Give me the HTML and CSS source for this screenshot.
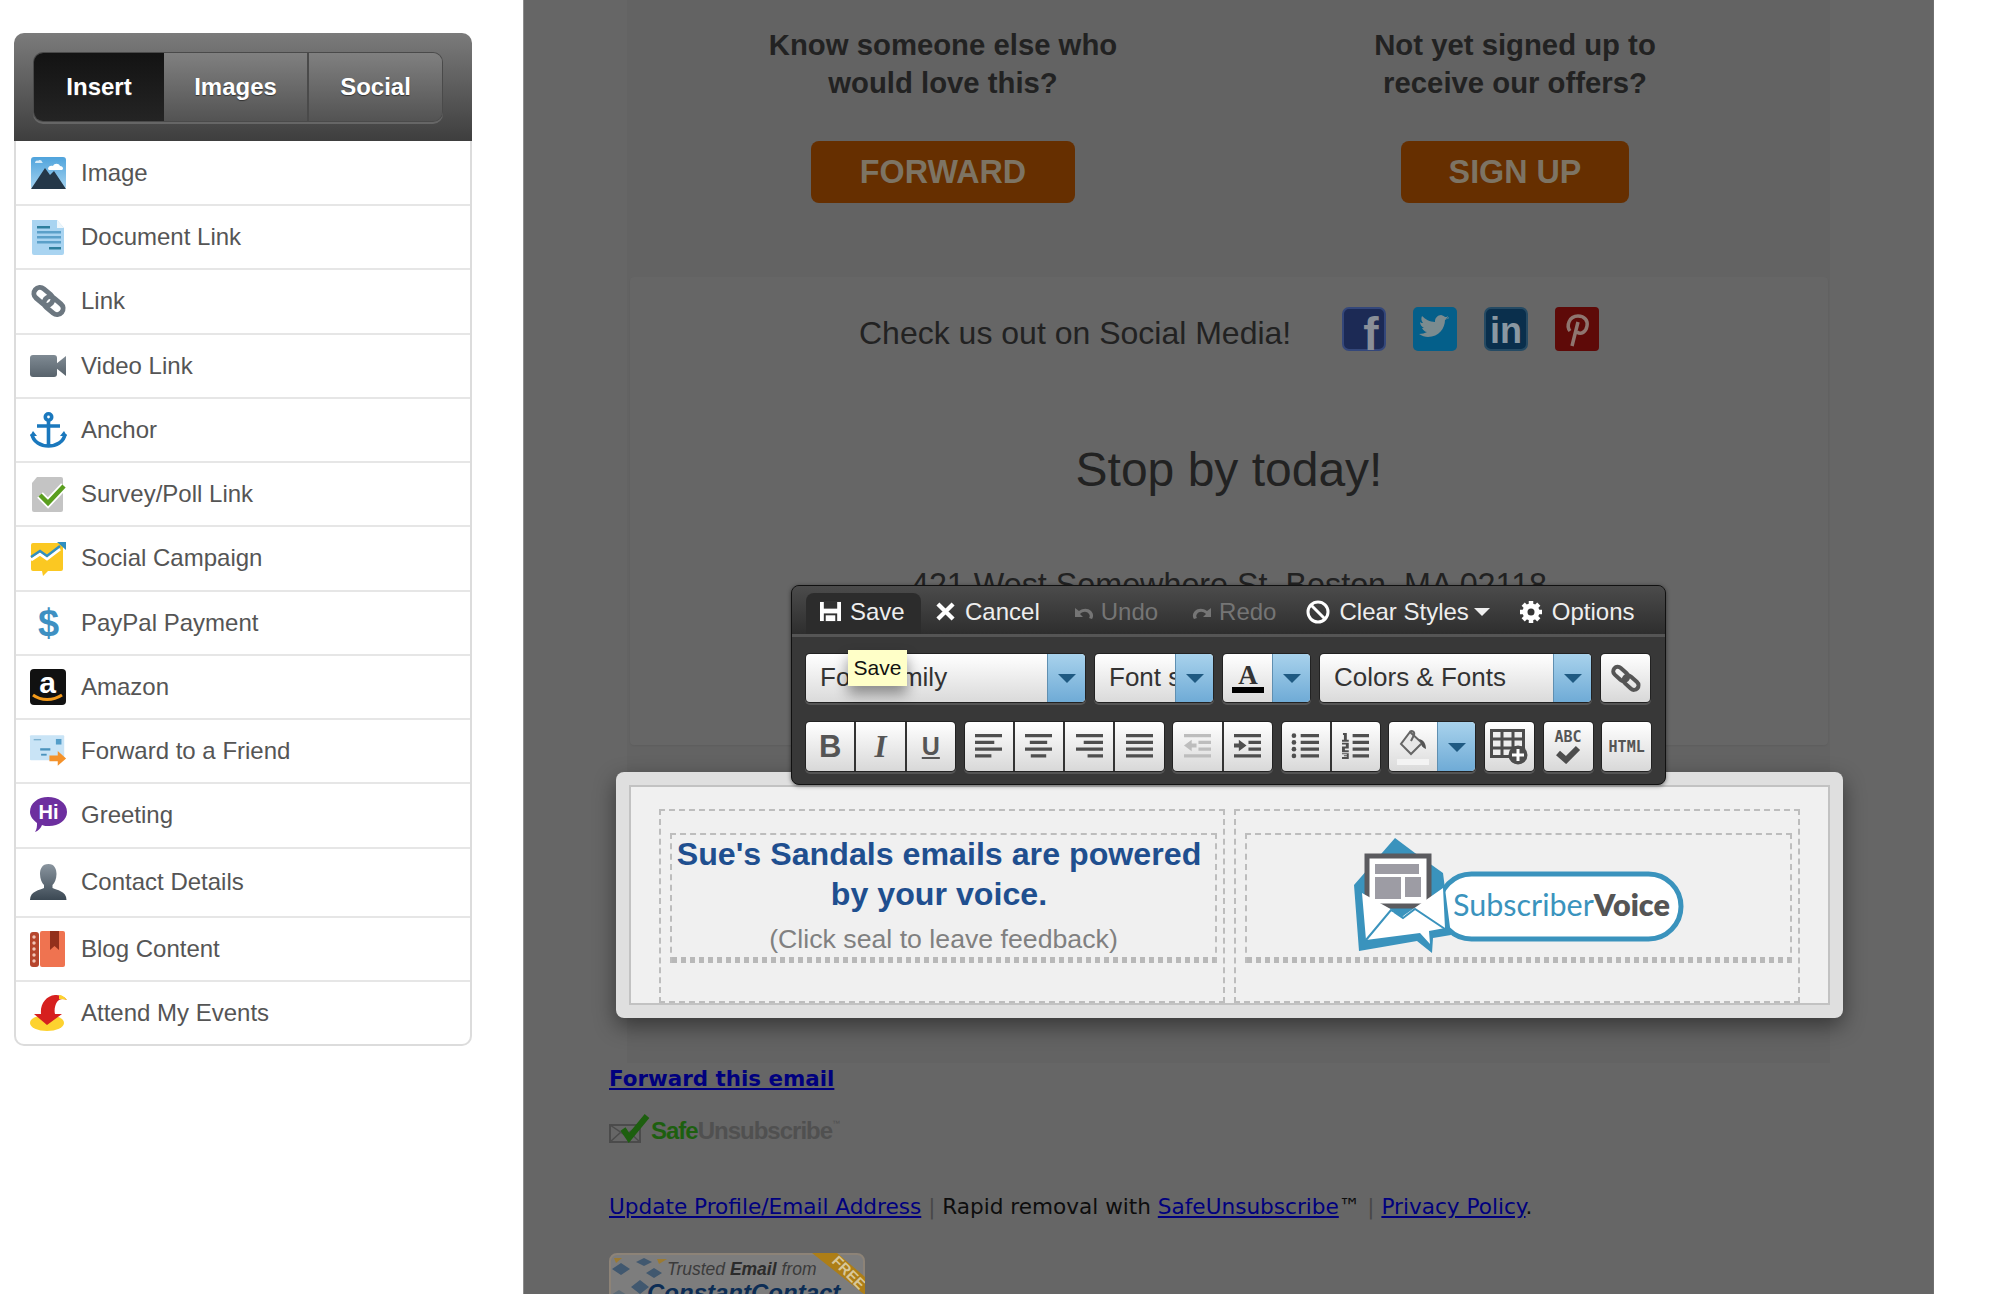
FILE: index.html
```html
<!DOCTYPE html>
<html lang="en">
<head>
<meta charset="utf-8">
<title>Email editor</title>
<link rel="stylesheet" href="styles.css">
</head>
<body>
<div class="page">
  <aside class="sidebar">
    <div class="side-head">
      <div class="tabs">
        <div class="tab tab-insert active">Insert</div>
        <div class="tab tab-images">Images</div>
        <div class="tab tab-social">Social</div>
      </div>
    </div>
    <ul class="menu">
      <li class="row"><svg class="mi" viewBox="0 0 37 36"><defs><linearGradient id="sky" x1="0" y1="0" x2="0" y2="1"><stop offset="0" stop-color="#4fa3dc"/><stop offset="1" stop-color="#a5d3f0"/></linearGradient></defs><rect x="1" y="2" width="35" height="32" rx="3" fill="url(#sky)"/><path d="M1 34 15 13l5 7 4-4 12 18z" fill="#243748"/><path d="M18 14c0-3 3-4 5-3 1-3 6-3 7 0 3 0 4 3 2 4H19z" fill="#fff"/><path d="M5 8c0-2 2-3 3-2 1-2 4-1 4 1l1 1z" fill="#d6ebf8"/></svg><span>Image</span></li>
      <li class="row"><svg class="mi" viewBox="0 0 37 36"><path d="M2 1h25l7 8v25a2 2 0 0 1-2 2H4a2 2 0 0 1-2-2z" fill="#a9d4f1"/><path d="M27 1v8h7z" fill="#eef6fb"/><g fill="#5ba0c9"><rect x="7" y="12" width="24" height="2.5"/><rect x="7" y="17" width="24" height="2.5"/><rect x="7" y="22" width="24" height="2.5"/></g><rect x="7" y="7" width="13" height="2.5" fill="#2e7f9d"/><rect x="19" y="28" width="12" height="2.5" fill="#2e7f9d"/></svg><span>Document Link</span></li>
      <li class="row"><svg class="mi" viewBox="0 0 37 36"><g fill="none" stroke="#6c7780" stroke-width="5"><rect x="3" y="7" width="21" height="12" rx="6" transform="rotate(40 13 13)"/><rect x="13" y="17" width="21" height="12" rx="6" transform="rotate(40 24 23)"/></g></svg><span>Link</span></li>
      <li class="row"><svg class="mi" viewBox="0 0 37 36"><defs><linearGradient id="vid" x1="0" y1="0" x2="0" y2="1"><stop offset="0" stop-color="#7f8a93"/><stop offset="1" stop-color="#58636c"/></linearGradient></defs><rect x="0" y="7" width="27" height="22" rx="3" fill="url(#vid)"/><path d="M26 16 36 8v20l-10-8z" fill="url(#vid)"/></svg><span>Video Link</span></li>
      <li class="row"><svg class="mi" viewBox="0 0 37 36"><g fill="none" stroke="#1a78bd" stroke-width="3.6"><circle cx="18.500" cy="5" r="3.2"/><path d="M18.500 8v26M7 14h23M2 22c1 8 9 12 16.500 12S34 30 35 22"/></g><path d="M0 24 3 19l4 5zM37 24l-3-5-4 5z" fill="#1a78bd"/></svg><span>Anchor</span></li>
      <li class="row"><svg class="mi" viewBox="0 0 37 36"><path d="M7 1h24a2 2 0 0 1 2 2v31a2 2 0 0 1-2 2H4a2 2 0 0 1-2-2V7z" fill="#c4c4c4"/><path d="m10 19 8 8 16-17" fill="none" stroke="#fff" stroke-width="8"/><path d="m10 19 8 8 16-17" fill="none" stroke="#5a9e1f" stroke-width="4.500"/></svg><span>Survey/Poll Link</span></li>
      <li class="row"><svg class="mi" viewBox="0 0 37 36"><path d="M3 3h28a2 2 0 0 1 2 2v24a2 2 0 0 1-2 2H18l-5 5-1-5H3a2 2 0 0 1-2-2V5a2 2 0 0 1 2-2z" fill="#fbc822"/><path d="m1 20 9-6 7 5 13-10" fill="none" stroke="#fff" stroke-width="3"/><path d="m1 17 9-6 7 5 13-10" fill="none" stroke="#2f8fc0" stroke-width="2.500"/><path d="M27 2h9v8z" fill="#2f8fc0"/></svg><span>Social Campaign</span></li>
      <li class="row"><svg class="mi" viewBox="0 0 37 36"><text x="18.500" y="31" text-anchor="middle" class="dollar">$</text></svg><span>PayPal Payment</span></li>
      <li class="row"><svg class="mi" viewBox="0 0 37 36"><rect width="36" height="36" rx="4" fill="#111"/><text x="17.500" y="24" text-anchor="middle" class="amazon">a</text><path d="M3 26c8 6 20 6 29 0" fill="none" stroke="#f49a1a" stroke-width="3"/></svg><span>Amazon</span></li>
      <li class="row"><svg class="mi" viewBox="0 0 40 36"><rect y="1" width="37" height="27" rx="1" fill="#c9e4f6"/><rect x="28" y="5" width="6" height="6" fill="#559ec9"/><rect x="4" y="5" width="8" height="1.500" fill="#7fb2d0"/><rect x="11" y="15" width="11" height="2.500" fill="#4b93bd"/><rect x="12" y="21" width="6" height="2" fill="#4b93bd"/><path d="M21 23h9v-5l9 8-9 8v-5h-9z" fill="#f4922b"/></svg><span>Forward to a Friend</span></li>
      <li class="row"><svg class="mi" viewBox="0 0 37 36"><path d="M18 0c10 0 19 6 19 15 0 8-8 14-18 14-3 0-5 0-7-1-1 3-4 6-7 7 2-3 2-6 2-9C3 23 0 19 0 15 0 6 8 0 18 0z" fill="#6d2f9f"/><text x="18.500" y="22" text-anchor="middle" class="hi">Hi</text></svg><span>Greeting</span></li>
      <li class="row row-contact"><svg class="mi" viewBox="0 0 37 36"><defs><linearGradient id="per" x1="0" y1="0" x2="0" y2="1"><stop offset="0" stop-color="#8a959f"/><stop offset="1" stop-color="#3b4853"/></linearGradient></defs><path d="M18.500 0c6 0 8 5 8 10 0 5-2 9-4 11v3c4 2 14 3 14 12H0c0-9 10-10 14-12v-3c-2-2-4-6-4-11 0-5 2-10 8.500-10z" fill="url(#per)"/></svg><span>Contact Details</span></li>
      <li class="row"><svg class="mi" viewBox="0 0 37 36"><rect x="0" y="1" width="9" height="35" rx="3" fill="#b6452c"/><g fill="#f3c5b6"><circle cx="4" cy="6" r="1.700"/><circle cx="4" cy="12" r="1.700"/><circle cx="4" cy="18" r="1.700"/><circle cx="4" cy="24" r="1.700"/><circle cx="4" cy="30" r="1.700"/></g><rect x="10" y="0" width="25" height="36" rx="2" fill="#ef7350"/><path d="M20 0h9v19l-4.500-4-4.500 4z" fill="#92301c"/></svg><span>Blog Content</span></li>
      <li class="row"><svg class="mi" viewBox="0 0 37 36"><ellipse cx="17" cy="28" rx="17" ry="8" fill="#fdd22f"/><path d="M25 0c4 0 9 1 12 5-4-2-8-1-10 2-2 3-3 8-2 12h7L17 30 4 19h7C10 9 16 1 25 0z" fill="#d6201f"/><path d="M29 0c3 0 6 2 8 5-3-1-6-1-8-1z" fill="#fdd22f"/></svg><span>Attend My Events</span></li>
    </ul>
  </aside>

  <main class="stage">
    <div class="email">
      <section class="offers">
        <div class="offer">
          <h2 class="offer-title">Know someone else who<br>would love this?</h2>
          <div class="cta cta-forward">FORWARD</div>
        </div>
        <div class="offer">
          <h2 class="offer-title">Not yet signed up to<br>receive our offers?</h2>
          <div class="cta cta-signup">SIGN UP</div>
        </div>
      </section>

      <section class="card">
        <div class="social-row">
          <span class="social-label">Check us out on Social Media!</span>
          <div class="social-icons">
            <svg class="si" viewBox="0 0 44 44"><rect x="1" y="1" width="42" height="42" rx="6" fill="#1c2a55" stroke="#34477a" stroke-width="2"/><text x="29" y="43" text-anchor="middle" class="si-f">f</text></svg>
            <svg class="si" viewBox="0 0 44 44"><rect width="44" height="44" rx="5" fill="#045f8a"/><path d="M36 11c-1 1-2 1-3 1 1-1 2-2 2-3-1 1-2 1-3 1-1-1-3-2-4-2-3 0-6 3-6 6v1C17 15 12 12 9 9c-1 2-1 5 1 7-1 0-2 0-3-1 0 3 2 5 4 6h-2c1 2 3 4 5 4-2 1-5 2-8 2 3 2 6 3 9 3 11 0 17-9 17-17 2-1 3-2 4-3z" fill="#7b8b8f"/></svg>
            <svg class="si" viewBox="0 0 44 44"><rect x="1" y="1" width="42" height="42" rx="6" fill="#0a2f4c" stroke="#254a63" stroke-width="2"/><text x="22" y="36" text-anchor="middle" class="si-in">in</text></svg>
            <svg class="si" viewBox="0 0 44 44"><rect width="44" height="44" rx="4" fill="#5e0a08"/><path d="M15 24c-4-5-1-15 8-15 7 0 10 5 9 10-1 6-6 9-10 6M23 15l-6 24" fill="none" stroke="#8f7670" stroke-width="3.500"/></svg>
          </div>
        </div>
        <h1 class="stop">Stop by today!</h1>
        <p class="address">421 West Somewhere St, Boston, MA 02118</p>
      </section>

      <section class="selected">
        <div class="selected-inner">
          <div class="dash-outer">
            <div class="dash-inner feedback">
              <h3 class="feedback-title">Sue's Sandals emails are powered<br>by your voice.</h3>
              <p class="feedback-sub">(Click seal to leave feedback)</p>
            </div>
          </div>
          <div class="dash-outer">
            <div class="dash-inner seal">
              <svg class="logo" viewBox="0 0 332 116">
                <rect x="85" y="36" width="242" height="65" rx="32.500" fill="#fff" stroke="#3a93bd" stroke-width="5"/>
                <path d="M41 0 61 15 89 35 97 97 79 100 78 115 63 103 5 113 0 47z" fill="#3a93bd"/>
                <rect x="13" y="18" width="62" height="50" fill="#fff" stroke="#5b5b5f" stroke-width="5"/>
                <rect x="21" y="26" width="44" height="10" fill="#9d9ca4"/>
                <rect x="21" y="39" width="26" height="22" fill="#9d9ca4"/>
                <rect x="51" y="39" width="16" height="20" fill="#9d9ca4"/>
                <path d="M8 55 49 78 89 50 91 90 75 93 76 106 66 95 12 102z" fill="#fff"/>
                <path d="M49 78 37 72 12 102M40 74l9 6 12-9 30 20" fill="none" stroke="#3a93bd" stroke-width="2"/>
                <text x="99" y="78" class="logo-text"><tspan class="logo-sub">Subscriber</tspan><tspan class="logo-voice">Voice</tspan></text>
              </svg>
            </div>
          </div>
        </div>
      </section>
    </div>

    <footer class="foot">
      <a class="foot-forward">Forward this email</a>
      <div class="safe">
        <svg class="safe-mark" viewBox="0 0 42 30"><rect x="1" y="11" width="30" height="17" fill="none" stroke="#4b4b4b" stroke-width="2"/><path d="m1 11 15 10 15-10M1 28l11-10M31 28 20 18" fill="none" stroke="#4b4b4b" stroke-width="1.500"/><path d="M14 15l6 9L38 2" fill="none" stroke="#1d5f0f" stroke-width="6"/></svg>
        <span class="safe-a">Safe</span><span class="safe-b">Unsubscribe</span><span class="safe-tm">™</span>
      </div>
      <p class="foot-links"><a>Update Profile/Email Address</a> <span class="pipe">|</span> Rapid removal with <a>SafeUnsubscribe</a>™ <span class="pipe">|</span> <a>Privacy Policy</a>.</p>
      <svg class="trust" viewBox="0 0 256 50">
        <rect x="1" y="1" width="254" height="80" rx="7" fill="#7d7d7d" stroke="#8d8377" stroke-width="2"/>
        <path d="m3 16 9-6 9 6-9 6zM22 34l9-7 9 7-9 7zM37 20l8-5 8 5-8 5zM27 9l8-4 8 4-8 4z" fill="#41586f"/>
        <path d="M5 5h8l-6 5zM48 6h10l-8 5z" fill="#9b7a32"/>
        <path d="m2 42 8-5 8 5-8 6z" fill="#5d6b76"/>
        <text x="58" y="22" class="trust-a">Trusted <tspan class="trust-em">Email</tspan> from</text>
        <text x="38" y="48" class="trust-b">ConstantContact</text>
        <path d="M203 0h25l28 24v18z" fill="#ad7e17"/>
        <text x="0" y="0" transform="translate(222 9) rotate(45)" class="trust-free">FREE</text>
      </svg>
    </footer>

    <div class="toolbar">
      <div class="tb-top">
        <div class="tb-item tb-save">
          <svg class="tb-ic" viewBox="0 0 24 22"><path d="M1 1h22v20H1z" fill="#fff"/><rect x="5" y="1" width="14" height="7" fill="#333"/><rect x="5" y="13" width="14" height="8" fill="#333"/><rect x="7" y="15" width="10" height="6" fill="#fff"/></svg>
          <span>Save</span>
        </div>
        <div class="tb-item tb-cancel">
          <svg class="tb-ic-x" viewBox="0 0 20 20"><path d="m2 2 16 16M18 2 2 18" stroke="#fff" stroke-width="4.500" fill="none"/></svg>
          <span>Cancel</span>
        </div>
        <div class="tb-item tb-undo dim">
          <svg class="tb-ic-u" viewBox="0 0 20 14"><path d="M1 2v9h8L6 8c3-3 7-3 9 0 1 1 1 3 0 4l3 1c2-3 1-6-1-8-3-3-8-3-12 0z" fill="#757575"/></svg>
          <span>Undo</span>
        </div>
        <div class="tb-item tb-redo dim">
          <svg class="tb-ic-u" viewBox="0 0 20 14"><path d="M19 2v9h-8l3-3c-3-3-7-3-9 0-1 1-1 3 0 4l-3 1c-2-3-1-6 1-8 3-3 8-3 12 0z" fill="#757575"/></svg>
          <span>Redo</span>
        </div>
        <div class="tb-item tb-clear">
          <svg class="tb-ic-c" viewBox="0 0 24 24"><circle cx="12" cy="12" r="10" fill="none" stroke="#fff" stroke-width="3"/><path d="m5 5 14 14" stroke="#fff" stroke-width="3"/></svg>
          <span>Clear Styles</span>
          <i class="caret"></i>
        </div>
        <div class="tb-item tb-options">
          <svg class="tb-ic-c" viewBox="0 0 24 24"><circle cx="12" cy="12" r="6" fill="none" stroke="#fff" stroke-width="5"/><path d="M12 1v22M1 12h22M4.200 4.200l15.600 15.600M19.800 4.200 4.200 19.800" stroke="#fff" stroke-width="4.500"/><circle cx="12" cy="12" r="3.500" fill="#333"/></svg>
          <span>Options</span>
        </div>
      </div>
      <div class="tb-row tb-row-a">
        <div class="sel sel-family"><span class="sel-text">Font family</span><span class="drop"></span></div>
        <div class="sel sel-size"><span class="sel-text">Font size</span><span class="drop"></span></div>
        <div class="sel sel-color"><span class="sel-a"><svg class="a-ic" viewBox="0 0 32 32"><text x="16" y="22" text-anchor="middle" class="a-letter">A</text><rect y="25" width="32" height="6" fill="#000"/></svg></span><span class="drop"></span></div>
        <div class="sel sel-theme"><span class="sel-text">Colors &amp; Fonts</span><span class="drop"></span></div>
        <div class="btn btn-link"><svg class="b-ic" viewBox="0 0 32 32"><g fill="none" stroke="#555" stroke-width="4"><rect x="2" y="7" width="17" height="9" rx="4.500" transform="rotate(42 10 12)"/><rect x="13" y="16" width="17" height="9" rx="4.500" transform="rotate(42 21 20)"/></g></svg></div>
      </div>
      <div class="tb-row tb-row-b">
        <div class="grp grp-fmt">
          <div class="btn fmt fmt-b">B</div>
          <div class="btn fmt fmt-i">I</div>
          <div class="btn fmt fmt-u">U</div>
        </div>
        <div class="grp grp-align">
          <div class="btn"><svg class="l-ic" viewBox="0 0 30 28"><path d="M1 1h28v3.500H1zM1 8h20v3.500H1zM1 15h28v3.500H1zM1 22h17v3.500H1z" fill="#4f4f4f"/></svg></div>
          <div class="btn"><svg class="l-ic" viewBox="0 0 30 28"><path d="M1 1h28v3.500H1zM6 8h18v3.500H6zM1 15h28v3.500H1zM7 22h16v3.500H7z" fill="#4f4f4f"/></svg></div>
          <div class="btn"><svg class="l-ic" viewBox="0 0 30 28"><path d="M1 1h28v3.500H1zM9 8h20v3.500H9zM1 15h28v3.500H1zM13 22h16v3.500H13z" fill="#4f4f4f"/></svg></div>
          <div class="btn"><svg class="l-ic" viewBox="0 0 30 28"><path d="M1 1h28v3.500H1zM1 8h28v3.500H1zM1 15h28v3.500H1zM1 22h28v3.500H1z" fill="#4f4f4f"/></svg></div>
        </div>
        <div class="grp grp-indent">
          <div class="btn"><svg class="l-ic" viewBox="0 0 30 28"><path d="M1 1h28v3.500H1zM16 8h13v3.500H16zM16 15h13v3.500H16zM1 22h28v3.500H1zM1 13l8-6v4h5v4H9v4z" fill="#bdbdbd"/></svg></div>
          <div class="btn"><svg class="l-ic" viewBox="0 0 30 28"><path d="M1 1h28v3.500H1zM16 8h13v3.500H16zM16 15h13v3.500H16zM1 22h28v3.500H1zM14 13l-8-6v4H1v4h5v4z" fill="#4f4f4f"/></svg></div>
        </div>
        <div class="grp grp-list">
          <div class="btn"><svg class="l-ic" viewBox="0 0 30 28"><path d="M10 1h19v3.500H10zM10 8h19v3.500H10zM10 15h19v3.500H10zM10 22h19v3.500H10z" fill="#4f4f4f"/><circle cx="3" cy="2.750" r="2.400" fill="#4f4f4f"/><circle cx="3" cy="9.750" r="2.400" fill="#4f4f4f"/><circle cx="3" cy="16.750" r="2.400" fill="#4f4f4f"/><circle cx="3" cy="23.750" r="2.400" fill="#4f4f4f"/></svg></div>
          <div class="btn"><svg class="l-ic" viewBox="0 0 30 28"><path d="M12 1h17v3.500H12zM12 8h17v3.500H12zM12 15h17v3.500H12zM12 22h17v3.500H12zM2 0h4v7h2v2H1V7h2V2H2zM1 10h7v6H4v2h4v2H1v-6h4v-2H1zM1 21h7v6H1v-2h5v-1H3v-1h3v-1H1z" fill="#4f4f4f"/></svg></div>
        </div>
        <div class="sel sel-fill"><span class="sel-a"><svg class="fill-ic" viewBox="0 0 32 36"><path d="M13 3 25 14 14 25 4 15z" fill="#e8e8e8" stroke="#666" stroke-width="2"/><path d="M13 3c2-2 5 0 4 3l-3 6" fill="none" stroke="#666" stroke-width="2"/><path d="M22 10c5 1 7 5 7 10-3-1-5-3-5-6z" fill="#555"/><rect x="0" y="30" width="32" height="6" fill="#f3f3f3"/></svg></span><span class="drop"></span></div>
        <div class="btn btn-table"><svg class="t-ic" viewBox="0 0 38 36"><path d="M1.500 1.500h32v26h-32z" fill="#eee" stroke="#4d4d4d" stroke-width="3"/><path d="M1 10h32M1 19h32M12 1v26M23 1v26" stroke="#4d4d4d" stroke-width="3"/><circle cx="28" cy="26" r="9.500" fill="#4d4d4d"/><path d="M28 20v12M22 26h12" stroke="#fff" stroke-width="3"/></svg></div>
        <div class="btn btn-spell"><div class="spell-wrap"><span class="spell-abc">ABC</span><svg class="spell-ic" viewBox="0 0 26 20"><path d="m3 9 8 7L23 4" fill="none" stroke="#4d4d4d" stroke-width="6"/></svg></div></div>
        <div class="btn btn-html">HTML</div>
      </div>
      <div class="tip">Save</div>
    </div>
  </main>
</div>
</body>
</html>
```
FILE: styles.css
```css
* { box-sizing: border-box; }
html, body { margin: 0; height: 100%; background: #fff; overflow: hidden; }
body { font-family: "Liberation Sans", Arial, sans-serif; color: #222; }
h1, h2, h3, p, ul { margin: 0; padding: 0; }
ul { list-style: none; }

.page { display: flex; align-items: flex-start; height: 1294px; overflow: hidden; }

/* Sidebar */
.sidebar { width: 458px; margin: 33px 0 0 14px; flex: none; }
.side-head { height: 108px; padding: 20px 0 0 20px; border-radius: 10px 10px 0 0; background: linear-gradient(#7b7b7b, #3e3e3e); }
.tabs { display: flex; width: 408px; height: 68px; border-radius: 9px; box-shadow: 0 0 0 1px #4a4a4a, 0 2px 0 1px #666; overflow: hidden; }
.tab { display: flex; align-items: center; justify-content: center; font-size: 24px; font-weight: 700; color: #fff; background: linear-gradient(#808080, #535353); text-shadow: 0 1px 1px #333; }
.tab.active { background: linear-gradient(#131313, #242424); }
.tab-insert { width: 130px; }
.tab-images { width: 145px; border-right: 2px solid #4a4a4a; }
.tab-social { width: 133px; }

.menu { border: 2px solid #dcdcdc; border-top: 0; border-radius: 0 0 10px 10px; background: #fff; }
.row { display: flex; align-items: center; gap: 14px; height: 64.25px; padding-left: 14px; font-size: 24px; color: #555; border-bottom: 2px solid #e6e6e6; }
.row:first-child { height: 65px; }
.row:last-child { border-bottom: 0; height: 62px; }
.row-contact { height: 69px; }
.mi { width: 37px; height: 36px; flex: none; overflow: visible; }
.dollar { font: 700 38px "Liberation Sans", sans-serif; fill: #3e90c2; }
.amazon { font: 700 30px "Liberation Sans", sans-serif; fill: #fff; }
.hi { font: 700 20px "Liberation Sans", sans-serif; fill: #fff; }

/* Main stage */
.stage { position: relative; width: 1411px; height: 1294px; margin-left: 51px; flex: none; background: #666; border-left: 1px solid #8c8c8c; border-right: 1px solid #6f6f6f; }
.email { width: 1203px; height: 1063px; margin-left: 103px; background: #636363; padding: 26px 0 0; }

.offers { display: grid; grid-template-columns: 632px 512px; height: 251px; }
.offer { display: flex; flex-direction: column; align-items: center; }
.offer-title { font-size: 29.3px; font-weight: 700; line-height: 38px; text-align: center; color: #222; }
.cta { display: flex; align-items: center; justify-content: center; height: 62px; margin-top: 39px; border-radius: 8px; background: #662f00; color: #7d7464; font-size: 32.3px; font-weight: 700; }
.cta-forward { width: 264px; }
.cta-signup { width: 228px; }

.card { width: 1198px; height: 468px; margin-left: 3px; background: #666; border-radius: 4px; box-shadow: 0 1px 2px rgba(0,0,0,.06); text-align: center; padding-top: 30px; }
.social-row { display: flex; align-items: center; height: 44px; padding-left: 229px; }
.social-label { font-size: 32px; line-height: 38px; padding-top: 7px; color: #222; width: 483px; text-align: left; }
.social-icons { display: flex; gap: 27px; }
.si { width: 44px; height: 44px; }
.si-f { font: 700 46px "Liberation Sans", sans-serif; fill: #8a8f98; }
.si-in { font: 700 36px "Liberation Sans", sans-serif; fill: #8a98a2; }
.stop { margin-top: 89px; font-size: 48px; font-weight: 400; line-height: 60px; color: #222; }
.address { margin-top: 66px; font-size: 32.3px; line-height: 38px; color: #222; }

/* Selected block */
.selected { width: 1227px; height: 246px; margin: 27px 0 0 -11px; padding: 13px; background: #dfdfdf; border-radius: 8px; box-shadow: 0 8px 22px rgba(0,0,0,.45); }
.selected-inner { display: grid; grid-template-columns: 566px 566px; column-gap: 9px; height: 220px; padding: 22px 0 0 28px; background: #f0f0f0; border: 2px solid #c2c2c2; }
.dash-outer { height: 194px; padding: 22px 6px 0 9px; border: 2px dashed #bdbdbd; }
.dash-inner { height: 130px; padding-bottom: 6px; border: 2px dashed #bdbdbd; border-bottom: 0; background: repeating-linear-gradient(90deg, #b8b8b8 0 5px, transparent 5px 9px) left bottom / 100% 6px no-repeat; }
.feedback { text-align: center; }
.feedback-title { padding-right: 9px; margin-top: -1px; font-size: 32.2px; line-height: 40px; font-weight: 700; color: #1f4f8f; }
.feedback-sub { margin-top: 8px; font-size: 26.7px; line-height: 34px; color: #808080; }
.seal { display: flex; justify-content: flex-start; padding: 0 0 0 107px; }
.logo { width: 332px; height: 116px; flex: none; margin-top: 3px; }
.logo-text { font: 30.5px Lato, "Open Sans", sans-serif; }
.logo-sub { fill: #3a93bd; }
.logo-voice { fill: #555; font-weight: 800; }

/* Footer of the email */
.foot { padding: 0 0 0 85px; font-family: "DejaVu Sans", Verdana, sans-serif; color: #0d0d0d; }
.foot a { color: #00007e; text-decoration: underline; }
.foot-forward { display: block; margin-top: 2px; font-size: 21.4px; line-height: 28px; font-weight: 700; }
.safe { display: flex; align-items: flex-end; height: 24px; margin-top: 26px; font-family: "Liberation Sans", sans-serif; font-size: 24px; font-weight: 700; line-height: 24px; letter-spacing: -1px; }
.safe-mark { width: 42px; height: 30px; margin-bottom: -1px; }
.safe-a { color: #1d5f0f; }
.safe-b { color: #505050; }
.safe-tm { align-self: flex-start; color: #505050; font-size: 8px; line-height: 10px; font-weight: 400; }
.foot-links { margin-top: 51px; font-size: 21.6px; line-height: 26px; }
.pipe { color: #484848; }
.trust { display: block; width: 256px; height: 50px; margin-top: 33px; }
.trust-a { font: italic 17.5px "Liberation Sans", sans-serif; fill: #3b3b3b; }
.trust-em { font-weight: 700; fill: #2b2b2b; }
.trust-b { font: italic 700 24px "Liberation Sans", sans-serif; fill: #0c2d55; }
.trust-free { font: 700 15px "Liberation Sans", sans-serif; fill: #d8c79a; }

/* Floating toolbar */
.toolbar { position: absolute; left: 267px; top: 585px; width: 875px; height: 200px; border-radius: 8px; background: #383838; border: 1px solid #111; box-shadow: 0 1px 4px rgba(0,0,0,.5); }
.tb-top { display: flex; align-items: flex-end; height: 51px; padding-left: 14px; border-radius: 7px 7px 0 0; background: linear-gradient(#4b4b4b, #2e2e2e); border-bottom: 3px solid #555; font-size: 24px; color: #eee; }
.tb-item { display: flex; align-items: center; gap: 10px; height: 41px; padding-bottom: 4px; }
.tb-save { width: 115px; gap: 8px; padding-left: 13px; background: #2c2c2c; border-radius: 8px 8px 0 0; }
.tb-cancel { margin-left: 15px; }
.tb-undo { margin-left: 34px; gap: 7px; }
.tb-redo { margin-left: 34px; gap: 7px; }
.tb-clear { margin-left: 30px; gap: 9px; }
.tb-options { margin-left: 29px; gap: 9px; }
.dim { color: #757575; }
.tb-ic { width: 23px; height: 21px; }
.tb-ic-x { width: 19px; height: 19px; }
.tb-ic-u { width: 20px; height: 14px; margin-top: 2px; }
.tb-ic-c { width: 24px; height: 24px; }
.caret { width: 0; height: 0; margin-left: -4px; border: 8px solid transparent; border-top: 8px solid #eee; border-bottom: 0; }

.tb-row { display: flex; padding-left: 14px; }
.tb-row-a { gap: 10px; margin-top: 17px; height: 48px; }
.tb-row-b { gap: 9.6px; margin-top: 20px; height: 49px; }

.sel, .btn, .grp { border-radius: 4px; box-shadow: 0 0 0 1px #222, 0 2px 0 1px #555; }
.sel { display: flex; overflow: hidden; background: linear-gradient(#fff, #dadada); font-size: 26px; color: #333; }
.sel-text { flex: 1; min-width: 0; padding-left: 14px; line-height: 46px; white-space: nowrap; overflow: hidden; }
.sel-a { flex: 1; display: flex; align-items: center; justify-content: center; }
.drop { position: relative; width: 38px; flex: none; background: linear-gradient(#a8d2ec, #6fabd6); border-left: 1px solid #5f8fb1; }
.drop::after { content: ""; position: absolute; left: 50%; top: 50%; margin: -4px 0 0 -9px; border: 9px solid transparent; border-top: 9px solid #1f5a82; border-bottom: 0; }
.sel-family { width: 279px; }
.sel-size { width: 118px; }
.sel-color { width: 87px; }
.sel-theme { width: 271px; }
.sel-fill { width: 86px; }
.a-ic { width: 32px; height: 32px; }
.a-letter { font: 700 27px "Liberation Serif", serif; fill: #333; }
.fill-ic { width: 32px; height: 36px; }

.grp { display: flex; background: #333; overflow: hidden; gap: 2px; }
.grp-fmt { width: 149px; }
.grp-align { width: 199px; }
.grp-indent { width: 99px; }
.grp-list { width: 98px; }
.btn { display: flex; align-items: center; justify-content: center; width: 49px; background: linear-gradient(#fff, #d8d8d8); color: #555; }
.grp .btn { box-shadow: none; border-radius: 0; flex: 1; width: auto; }
.b-ic { width: 32px; height: 32px; }
.l-ic { width: 29px; height: 27px; }
.t-ic { width: 38px; height: 36px; }
.fmt { font-size: 31px; line-height: 1; }
.fmt-b { font-weight: 700; }
.fmt-i { font-family: "Liberation Serif", serif; font-style: italic; font-weight: 700; }
.fmt-u { font-size: 25px; font-weight: 700; text-decoration: underline; }
.spell-wrap { display: flex; flex-direction: column; align-items: center; }
.spell-abc { font: 700 15px/14px "DejaVu Sans Mono", monospace; color: #555; }
.spell-ic { width: 26px; height: 20px; }
.btn-html { font: 700 15px "DejaVu Sans Mono", monospace; color: #555; }

.tip { position: absolute; left: 56px; top: 64px; width: 59px; height: 36px; background: #ffffc8; color: #111; font-size: 21px; line-height: 36px; text-align: center; box-shadow: 0 8px 14px rgba(0,0,0,.4); }
```
